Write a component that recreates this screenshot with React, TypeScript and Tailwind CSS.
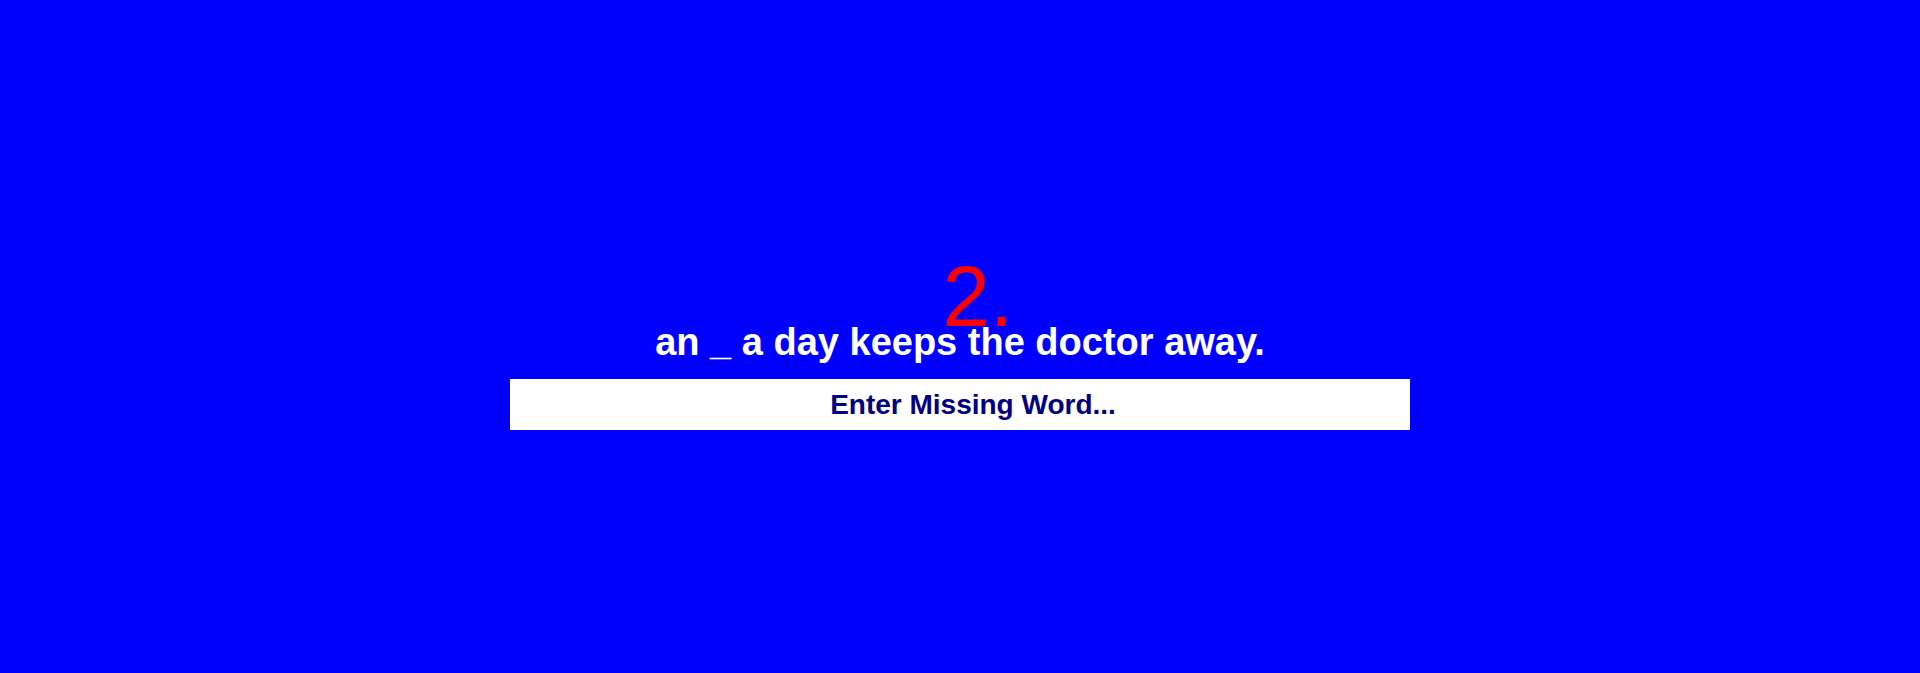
import React from "react";

export default function App() {
  return (
    <div className="w-full h-[673px] bg-[#0000ff] overflow-hidden pt-[270px]" style={{ fontFamily: '"Liberation Sans", Arial, sans-serif' }}>
      <div className="text-center pl-[36px] text-[85px] leading-[53px] text-[#ff0000] font-['Liberation_Sans',Arial,sans-serif]">
        2.
      </div>
      <div className="text-center text-[38px] leading-[38px] font-bold text-white font-['Liberation_Sans',Arial,sans-serif]">
        an _ a day keeps the doctor away.
      </div>
      <div className="flex justify-center mt-[18px]">
        <input
          type="text"
          placeholder="Enter Missing Word..."
          className="w-[900px] h-[51px] bg-white text-center pl-[26px] text-[28px] font-bold text-[#000080] placeholder:text-[#000080] outline-none border-0 font-['Liberation_Sans',Arial,sans-serif]"
        />
      </div>
    </div>
  );
}
